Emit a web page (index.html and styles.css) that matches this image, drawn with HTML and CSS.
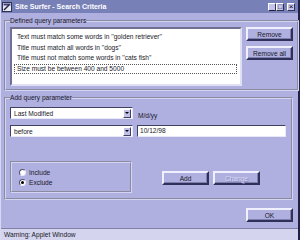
FILE: index.html
```html
<!DOCTYPE html>
<html lang="en">
  <head>
    <meta charset="UTF-8" />
    <title>Site Surfer - Search Criteria</title>
    <link rel="stylesheet" href="styles.css">
  </head>
  <body>
    <div class="window">
      <div class="titlebar">
        <svg class="app-icon" width="10" height="10" viewBox="0 0 10 10">
          <rect x="0.5" y="0.5" width="9" height="9" fill="#e8e8f0" stroke="#303050" />
          <rect x="1.5" y="1.5" width="7" height="2" fill="#404080" />
          <path d="M2 8 L7 3" stroke="#202040" stroke-width="1.4" />
        </svg>
        <span class="title">Site Surfer - Search Criteria</span>
        <div class="win-buttons">
          <span class="win-btn">_</span><span class="win-btn">&#9633;</span>
          <span class="win-btn close">&times;</span>
        </div>
      </div>

      <div class="main">
        <fieldset class="group defined">
          <legend>Defined query parameters</legend>
          <div class="list">
            <div class="item">Text must match some words in ''golden retriever''</div>
            <div class="item">Title must match all words in ''dogs''</div>
            <div class="item">Title must not match some words in ''cats fish''</div>
            <div class="item selected">Size must be between 400 and 5000</div>
          </div>
          <div class="side-buttons">
            <button type="button">Remove</button>
            <button type="button">Remove all</button>
          </div>
        </fieldset>

        <fieldset class="group add">
          <legend>Add query parameter</legend>
          <div class="row">
            <div class="combo"><span>Last Modified</span><i class="arrow"></i></div>
            <span class="hint">M/d/yy</span>
          </div>
          <div class="row">
            <div class="combo"><span>before</span><i class="arrow"></i></div>
            <div class="field">10/12/98</div>
          </div>
          <div class="row bottom">
            <div class="radios">
              <label><i class="radio"></i>Include</label>
              <label><i class="radio checked"></i>Exclude</label>
            </div>
            <div class="actions">
              <button type="button">Add</button>
              <button type="button" class="disabled">Change</button>
            </div>
          </div>
        </fieldset>

        <div class="footer">
          <button type="button" class="ok">OK</button>
        </div>
      </div>

      <div class="status">Warning: Applet Window</div>
    </div>
  </body>
</html>
```

FILE: styles.css
```css
body {
  margin: 0;
  font-family: "Liberation Sans", Arial, sans-serif;
  font-size: 6.6px;
  color: #181828;
}
.window {
  width: 300px;
  height: 240px;
  box-sizing: border-box;
  display: flex;
  flex-direction: column;
  background: #b0b0e0;
  border-right: 2px solid #202048;
  border-left: 1px solid #d8d8f4;
}
.titlebar {
  height: 13px;
  display: flex;
  align-items: center;
  background: #7880b8;
  padding: 0 3px 0 1px;
}
.app-icon {
  margin-right: 3px;
}
.title {
  color: #fff;
  font-weight: bold;
  font-size: 7px;
  flex: 1;
}
.win-buttons {
  display: flex;
}
.win-btn {
  width: 8px;
  height: 8px;
  box-sizing: border-box;
  background: #c4c4ec;
  border: 1px solid;
  border-color: #fff #303050 #303050 #fff;
  font-size: 7px;
  line-height: 5px;
  text-align: center;
  color: #000;
}
.win-btn.close {
  margin-left: 3px;
  font-size: 8px;
}
.main {
  flex: 1;
  padding: 4px 5px 0 3px;
  display: flex;
  flex-direction: column;
}
.group {
  margin: 0;
  border: 2px groove #d4d4f4;
  padding: 2px 4px 3px 4px;
}
.group legend {
  padding: 0;
  line-height: 8px;
}
.defined {
  display: flex;
  gap: 4px;
}
.list {
  width: 223px;
  height: 52px;
  background: #fff;
  border: 2px solid;
  border-color: #707090 #e0e0f4 #e0e0f4 #707090;
  padding: 3px 3px 0 2px;
  line-height: 10.6px;
}
.item {
  padding-left: 2px;
  height: 10.6px;
  box-sizing: border-box;
  border: 1px solid transparent;
  line-height: 8.6px;
}
.item.selected {
  border: 1px dotted #555;
}
.side-buttons {
  display: flex;
  flex-direction: column;
  gap: 5px;
}
button {
  font-family: inherit;
  font-size: 6.6px;
  width: 47px;
  height: 14px;
  padding: 0;
  background: #b0b0e0;
  color: #181828;
  border: 2px solid;
  border-color: #f0f0ff #303058 #303058 #f0f0ff;
  box-shadow: inset -1px -1px 0 #8080b0;
}
button.disabled {
  color: #d8d8f4;
  text-shadow: 1px 1px 0 #8888b8;
}
.add {
  margin-top: 3px;
  height: 106px;
  padding-top: 5px;
  box-sizing: border-box;
}
.row {
  display: flex;
  align-items: center;
  gap: 4px;
  margin-bottom: 6px;
}
.combo {
  width: 123px;
  height: 12px;
  box-sizing: border-box;
  background: #fff;
  border: 1px solid;
  border-color: #404060 #e8e8f8 #e8e8f8 #404060;
  display: flex;
  align-items: center;
  padding-left: 3px;
}
.combo span {
  flex: 1;
}
.arrow {
  width: 8px;
  height: 9px;
  box-sizing: border-box;
  margin-right: 1px;
  background: #c0c0e8;
  border: 1px solid;
  border-color: #fff #404060 #404060 #fff;
  position: relative;
}
.arrow::after {
  content: "";
  position: absolute;
  left: 1px;
  top: 2px;
  border-left: 2px solid transparent;
  border-right: 2px solid transparent;
  border-top: 2px solid #000;
}
.hint {
  padding-left: 1px;
  position: relative;
  top: 2px;
}
.field {
  flex: 1;
  height: 12px;
  box-sizing: border-box;
  margin-right: 1px;
  background: #fff;
  border: 1px solid;
  border-color: #404060 #e8e8f8 #e8e8f8 #404060;
  padding-left: 2px;
  line-height: 10px;
}
.row.bottom {
  margin-top: 24px;
  margin-bottom: 0;
  gap: 30px;
}
.radios {
  width: 122px;
  height: 32px;
  box-sizing: border-box;
  border: 2px groove #d4d4f4;
  display: flex;
  flex-direction: column;
  justify-content: center;
  gap: 3px;
  padding-left: 7px;
}
.radios label {
  display: flex;
  align-items: center;
  gap: 3px;
}
.radio {
  width: 7px;
  height: 7px;
  box-sizing: border-box;
  border-radius: 50%;
  background: #fff;
  border: 1px solid;
  border-color: #505070 #e8e8f8 #e8e8f8 #505070;
  position: relative;
}
.radio.checked::after {
  content: "";
  position: absolute;
  left: 1px;
  top: 1px;
  width: 3px;
  height: 3px;
  border-radius: 50%;
  background: #000;
}
.actions {
  display: flex;
  gap: 4px;
  padding-top: 2px;
}
.footer {
  display: flex;
  justify-content: flex-end;
  padding-top: 8px;
}
.status {
  height: 12px;
  box-sizing: border-box;
  background: #d4d4ee;
  border-top: 1px solid #8080a8;
  padding-left: 3px;
  line-height: 11px;
}
```
